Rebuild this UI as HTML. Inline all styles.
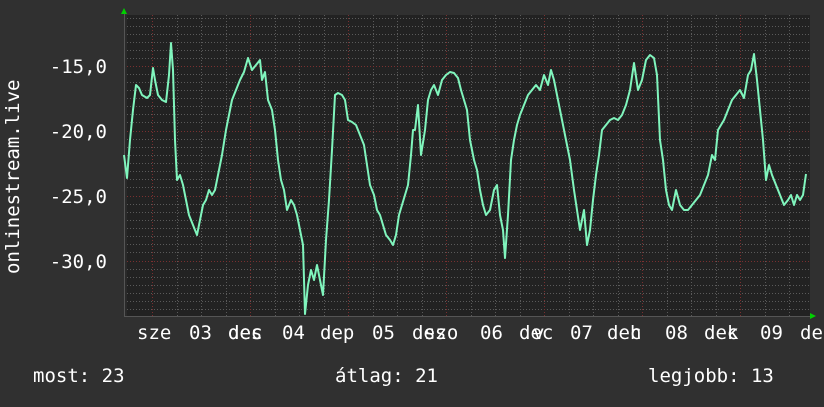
<!DOCTYPE html>
<html><head><meta charset="utf-8"><style>
html,body{margin:0;padding:0;background:#303030;}
body{width:824px;height:402px;overflow:hidden;}
svg text{font-family:"DejaVu Sans Mono","Liberation Mono",monospace;fill:#fff;}
</style></head><body>
<svg width="824" height="402" xmlns="http://www.w3.org/2000/svg">
<rect width="824" height="402" fill="#303030"/>
<rect x="124" y="15" width="686" height="302" fill="#222222"/>
<rect x="124" y="15" width="3" height="302" fill="#2a2a2a"/>
<g stroke="#5a5a5a" stroke-width="1" stroke-dasharray="1,2">
<path d="M127 18.5H809M127 26.5H809M127 34.5H809M127 42.5H809M127 50.5H809M127 58.5H809M127 74.5H809M127 82.5H809M127 90.5H809M127 98.5H809M127 106.5H809M127 114.5H809M127 122.5H809M127 139.5H809M127 147.5H809M127 155.5H809M127 163.5H809M127 171.5H809M127 179.5H809M127 187.5H809M127 204.5H809M127 212.5H809M127 220.5H809M127 228.5H809M127 236.5H809M127 244.5H809M127 252.5H809M127 269.5H809M127 277.5H809M127 285.5H809M127 293.5H809M127 301.5H809M127 309.5H809"/>
<path d="M177.5 15V316M201.5 15V316M226.5 15V316M275.5 15V316M299.5 15V316M324.5 15V316M373.5 15V316M397.5 15V316M422.5 15V316M471.5 15V316M495.5 15V316M520.5 15V316M569.5 15V316M593.5 15V316M618.5 15V316M667.5 15V316M691.5 15V316M716.5 15V316M765.5 15V316M789.5 15V316"/>
</g>
<g stroke="#7a3030" stroke-width="1" stroke-dasharray="1,2">
<path d="M127 66.5H809M127 131.5H809M127 196.5H809M127 261.5H809"/>
<path d="M152.5 15V316M250.5 15V316M348.5 15V316M446.5 15V316M544.5 15V316M642.5 15V316M740.5 15V316"/>
</g>
<path d="M124 316.5H810M124.5 14V316" stroke="#555" stroke-width="1"/>
<polygon points="121,14 127,14 124,8" fill="#00d000"/>
<polygon points="810,313 810,319 816,316" fill="#00d000"/>
<polyline fill="none" stroke="#80f5bd" stroke-width="2" stroke-linejoin="round" points="124,155 127,178 130,140 133,110 136,85 139,88 142,95 147,98 150,95 153,68 155,80 158,95 162,100 166,102 169,75 171,43 173,70 175,140 177,180 180,175 183,185 186,200 189,215 193,225 197,235 200,220 203,205 206,200 209,190 212,195 215,190 218,175 222,155 226,130 229,115 232,100 236,90 240,80 244,72 248,58 252,70 256,65 260,60 262,80 265,72 268,100 272,110 275,130 278,160 281,180 284,190 287,210 291,200 294,205 297,215 300,230 303,245 305,314 308,285 311,270 314,280 317,265 320,280 323,295 326,240 329,200 332,150 335,95 338,93 342,95 345,100 348,120 352,122 356,125 360,135 364,145 367,165 370,185 374,195 377,210 380,215 383,225 386,235 390,240 393,245 396,235 399,215 402,205 405,195 408,185 411,155 413,130 415,130 418,105 421,155 425,130 428,100 431,90 434,85 438,95 442,80 446,75 450,72 454,73 458,78 461,90 464,100 467,110 470,140 474,160 477,170 480,190 483,205 486,215 490,210 494,190 497,185 500,215 503,230 505,258 508,215 511,160 514,140 517,125 520,115 524,105 528,95 532,90 536,85 540,90 544,75 548,85 551,70 554,80 558,100 562,120 566,140 570,160 574,190 577,210 580,230 584,210 587,245 590,230 593,200 596,175 599,155 602,130 606,125 610,120 614,118 618,120 622,115 626,105 630,90 634,63 638,90 642,80 646,60 650,55 654,58 657,75 660,140 663,160 666,190 669,205 672,210 676,190 680,205 684,210 688,210 692,205 696,200 700,195 704,185 708,175 712,155 715,160 718,130 721,125 724,120 728,110 732,100 736,95 740,90 744,98 748,75 751,70 754,54 757,80 760,110 763,140 766,180 769,165 772,175 776,185 780,195 784,205 788,200 791,195 794,205 797,195 800,200 803,195 806,174"/>
<g font-size="19" text-anchor="end">
<text x="107" y="73">-15,0</text>
<text x="107" y="138">-20,0</text>
<text x="107" y="203">-25,0</text>
<text x="107" y="268">-30,0</text>
</g>
<text font-size="19" transform="translate(19,274) rotate(-90)">onlinestream.live</text>
<g font-size="19">
<text x="137" y="339">sze</text><text x="189" y="339">03</text>
<text x="228" y="339">des</text><text x="228" y="339">dec</text><text x="282" y="339">04</text>
<text x="320" y="339">dep</text><text x="372" y="339">05</text>
<text x="412" y="339">des</text><text x="424" y="339">szo</text><text x="480" y="339">06</text>
<text x="519" y="339">dec</text><text x="533" y="339">v</text><text x="570" y="339">07</text>
<text x="607" y="339">dec</text><text x="630" y="339">h</text><text x="665" y="339">08</text>
<text x="704" y="339">dec</text><text x="727" y="339">k</text><text x="760" y="339">09</text>
<text x="800" y="339">de</text>
</g>
<g font-size="19">
<text x="33" y="382">most: 23</text>
<text x="335" y="382">átlag: 21</text>
<text x="648" y="382">legjobb: 13</text>
</g>
</svg>
</body></html>
